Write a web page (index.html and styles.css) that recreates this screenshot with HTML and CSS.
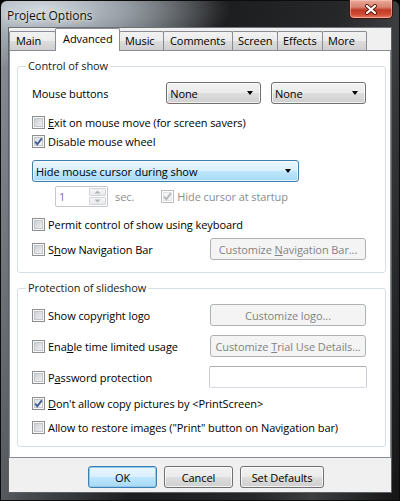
FILE: index.html
```html
<!DOCTYPE html>
<html>
<head>
<meta charset="utf-8">
<link rel="stylesheet" href="styles.css">
</head>
<body>
<div class="window">
  <div class="titlebar">
    <span class="title">Project Options</span>
    <div class="close">
      <svg width="14" height="11" viewBox="0 0 14 11"><path d="M3 2 L11 9 M11 2 L3 9" stroke="#5a1a10" stroke-width="4" stroke-linecap="round"/><path d="M3 2 L11 9 M11 2 L3 9" stroke="#fff" stroke-width="2.2" stroke-linecap="round"/></svg>
    </div>
  </div>
  <div class="client">
    <div class="tabs">
      <div class="tab t-main">Main</div>
      <div class="tab active t-adv">Advanced</div>
      <div class="tab t-music">Music</div>
      <div class="tab t-comm">Comments</div>
      <div class="tab t-screen">Screen</div>
      <div class="tab t-eff">Effects</div>
      <div class="tab t-more">More</div>
    </div>
    <div class="panel">
      <div class="group g1">
        <span class="legend">Control of show</span>
        <div class="row r-mouse">
          <span class="lbl-mouse">Mouse buttons</span>
          <div class="combo small"><span>None</span><span class="arrow"></span></div>
          <div class="combo small"><span>None</span><span class="arrow"></span></div>
        </div>
        <div class="row chk-row mt9">
          <span class="cb"></span><span><u>E</u>xit on mouse move (for screen savers)</span>
        </div>
        <div class="row chk-row mt1">
          <span class="cb checked"><svg width="11" height="11" viewBox="0 0 11 11"><path d="M2.2 5.6 L4.3 8.3 L8.8 2.4" fill="none" stroke="#3b5b94" stroke-width="1.8"/></svg></span><span>Disable mouse wheel</span>
        </div>
        <div class="row mt10">
          <div class="combo big hot"><span>Hide mouse cursor during show</span><span class="arrow"></span></div>
        </div>
        <div class="row r-spin">
          <div class="spin">
            <span class="spin-val">1</span>
            <div class="spin-btns">
              <span class="sb"><svg width="7" height="4" viewBox="0 0 7 4"><path d="M0.5 3.5 L3.5 0.5 L6.5 3.5Z" fill="#b0b4b8"/></svg></span>
              <span class="sb"><svg width="7" height="4" viewBox="0 0 7 4"><path d="M0.5 0.5 L3.5 3.5 L6.5 0.5Z" fill="#b0b4b8"/></svg></span>
            </div>
          </div>
          <span class="sec dis">sec.</span>
          <span class="cb checked disabled"><svg width="11" height="11" viewBox="0 0 11 11"><path d="M2.2 5.6 L4.3 8.3 L8.8 2.4" fill="none" stroke="#b3b6ba" stroke-width="1.8"/></svg></span><span class="dis">Hide cursor at startup</span>
        </div>
        <div class="row chk-row mt8">
          <span class="cb"></span><span>Permit control of show using keyboard</span>
        </div>
        <div class="row r-btn mt5">
          <div class="chk-lbl"><span class="cb"></span><span>S<u>h</u>ow Navigation Bar</span></div>
          <div class="btn disabled wide"><span>Customize <u>N</u>avigation Bar...</span></div>
        </div>
      </div>

      <div class="group g2">
        <span class="legend">Protection of slideshow</span>
        <div class="row r-btn">
          <div class="chk-lbl"><span class="cb"></span><span>Show copyright logo</span></div>
          <div class="btn disabled wide"><span>Customize logo...</span></div>
        </div>
        <div class="row r-btn mt9">
          <div class="chk-lbl"><span class="cb"></span><span>Ena<u>b</u>le time limited usage</span></div>
          <div class="btn disabled wide"><span>Customize <u>T</u>rial Use Details...</span></div>
        </div>
        <div class="row r-btn mt9">
          <div class="chk-lbl"><span class="cb"></span><span>P<u>a</u>ssword protection</span></div>
          <div class="edit"></div>
        </div>
        <div class="row chk-row mt6">
          <span class="cb checked"><svg width="11" height="11" viewBox="0 0 11 11"><path d="M2.2 5.6 L4.3 8.3 L8.8 2.4" fill="none" stroke="#3b5b94" stroke-width="1.8"/></svg></span><span><u>D</u>on't allow copy pictures by &lt;PrintScreen&gt;</span>
        </div>
        <div class="row chk-row mt6">
          <span class="cb"></span><span>Allow to restore images ("Print" button on Navigation bar)</span>
        </div>
      </div>
    </div>
    <div class="buttons">
      <div class="btn default b-ok">OK</div>
      <div class="btn b-cancel">Cancel</div>
      <div class="btn b-def">Set Defaults</div>
    </div>
  </div>
</div>
</body>
</html>
```

FILE: styles.css
```css
* { box-sizing: border-box; }
html, body { margin: 0; padding: 0; }
body {
  width: 400px;
  height: 501px;
  overflow: hidden;
  background: #000;
  font-family: "Open Sans", "Noto Sans", sans-serif;
  font-size: 11px;
  letter-spacing: -0.08px;
  color: #000;
}
u { text-decoration: underline; text-underline-offset: 1px; }

.window {
  width: 400px;
  height: 501px;
  border: 1px solid #0c0c0c;
  border-radius: 7px 7px 0 0;
  background:
    radial-gradient(ellipse 190px 60px at 40px 8px, rgba(214,221,227,0.95) 0%, rgba(170,178,186,0.8) 45%, rgba(120,126,132,0) 100%),
    linear-gradient(100deg, #8d949a 0%, #4b4f53 22%, #1c1d1e 45%, #262728 70%, #3b3d3f 82%, #151515 100%);
  display: flex;
  flex-direction: column;
}

.titlebar {
  height: 26px;
  display: flex;
  align-items: flex-start;
  position: relative;
}
.title {
  margin: 6px 0 0 6px;
  font-size: 12px;
  color: #111;
  text-shadow: 0 0 6px #e8edf1, 0 0 3px #e8edf1;
}
.close {
  position: absolute;
  right: 6px;
  top: -1px;
  width: 44px;
  height: 19px;
  border: 1px solid #4a130b;
  border-top: none;
  border-radius: 0 0 5px 5px;
  background: linear-gradient(#e9a99a 0%, #d9826f 40%, #bf3b26 55%, #d14a34 80%, #e2816b 100%);
  box-shadow: inset 0 0 0 1px rgba(255,210,200,0.5);
  display: flex;
  align-items: center;
  justify-content: center;
}

.client {
  margin: 0 7px;
  height: 466px;
  background: #f0f0f0;
  border: 1px solid #5e6266;
  border-top-color: #6d7378;
  display: flex;
  flex-direction: column;
}

.tabs {
  height: 22px;
  display: flex;
  align-items: flex-end;
  padding-left: 0;
}
.tab {
  height: 19px;
  border: 1px solid #898c95;
  border-bottom: none;
  border-radius: 2px 2px 0 0;
  background: linear-gradient(#f2f2f2 0%, #ebebeb 50%, #dddddd 51%, #cfcfcf 100%);
  padding-left: 6px;
  line-height: 17px;
  margin-left: -1px;
}
.t-main { width: 47px; margin-left: 0; }
.t-adv { width: 65px; }
.t-music { width: 45px; padding-left: 5px; }
.t-comm { width: 70px; }
.t-screen { width: 46px; padding-left: 5px; }
.t-eff { width: 46px; padding-left: 5px; }
.t-more { width: 45px; padding-left: 5px; }
.tab.active {
  height: 23px;
  margin-bottom: -1px;
  background: #fff;
  position: relative;
  z-index: 1;
  line-height: 19px;
  padding-left: 7px;
}

.panel {
  height: 408px;
  width: 382px;
  background: #fff;
  border: 1px solid #898c95;
  padding: 15px 0 0 7px;
}

.group {
  position: relative;
  width: 369px;
  border: 1px solid #d5dfe5;
  border-radius: 3px;
  padding: 15px 19px 0 14px;
  display: flex;
  flex-direction: column;
}
.g1 { padding-bottom: 12px; }
.g2 { margin-top: 15px; padding-bottom: 10px; }
.legend {
  position: absolute;
  top: -9px;
  left: 8px;
  padding: 0 2px;
  background: #fff;
  color: #1a1a1a;
  line-height: 16px;
}

.row { display: flex; align-items: center; }
.chk-row { height: 18px; }
.mt1 { margin-top: 1px; }
.mt5 { margin-top: 5px; }
.mt6 { margin-top: 6px; }
.mt8 { margin-top: 8px; }
.mt9 { margin-top: 9px; }
.mt10 { margin-top: 10px; }

.r-mouse { height: 22px; }
.lbl-mouse { width: 136px; }
.r-mouse .combo + .combo { margin-left: 10px; }

.cb {
  width: 13px;
  height: 13px;
  flex: none;
  margin-right: 3px;
  border: 1px solid #8e8f8f;
  background: linear-gradient(135deg, #c6cace 0%, #e2e4e6 60%, #f4f4f4 100%);
  box-shadow: inset 0 0 0 1px #f6f6f6, inset 0 0 0 2px #c3c6ca;
  display: flex;
  align-items: center;
  justify-content: center;
}
.cb.checked {
  background: linear-gradient(135deg, #d3d6d9 0%, #eceeef 60%, #fafafa 100%);
}
.cb.disabled {
  border-color: #bcbdbe;
  background: #f4f4f4;
  box-shadow: inset 0 0 0 1px #fff, inset 0 0 0 2px #e3e4e5;
}
.dis { color: #8d8d8d; }

.combo {
  height: 22px;
  border: 1px solid #707070;
  border-radius: 3px;
  background: linear-gradient(#f2f2f2 0%, #ebebeb 50%, #dddddd 51%, #cfcfcf 100%);
  box-shadow: inset 0 0 0 1px rgba(255,255,255,0.7);
  display: flex;
  align-items: center;
  justify-content: space-between;
  padding: 0 7px 0 3px;
}
.combo.small { width: 96px; }
.combo.big { width: 267px; }
.combo.hot {
  border-color: #3c7fb1;
  background: linear-gradient(#eaf6fd 0%, #d9f0fc 50%, #bee6fd 51%, #a7d9f5 100%);
}
.arrow {
  width: 0;
  height: 0;
  border-left: 3.5px solid transparent;
  border-right: 3.5px solid transparent;
  border-top: 4px solid #000;
}

.r-spin { height: 21px; margin-top: 4px; }
.spin {
  margin-left: 23px;
  width: 53px;
  height: 21px;
  border: 1px solid #c3c6cb;
  border-radius: 2px;
  background: #fff;
  display: flex;
  align-items: center;
  justify-content: space-between;
  padding: 0 1px 0 3px;
}
.spin-val { color: #7f6f9a; }
.spin-btns { display: flex; flex-direction: column; gap: 1px; }
.sb {
  width: 17px;
  height: 8px;
  border: 1px solid #d2d4d7;
  border-radius: 1px;
  background: linear-gradient(#f6f6f6, #e9e9e9);
  display: flex;
  align-items: center;
  justify-content: center;
}
.sec { margin: 0 27px 0 7px; }

.r-btn { height: 22px; justify-content: space-between; }
.chk-lbl { display: flex; align-items: center; }

.btn {
  height: 22px;
  border: 1px solid #707070;
  border-radius: 3px;
  background: linear-gradient(#f2f2f2 0%, #ebebeb 50%, #dddddd 51%, #cfcfcf 100%);
  box-shadow: inset 0 0 0 1px rgba(255,255,255,0.75);
  display: flex;
  align-items: center;
  justify-content: center;
}
.btn.disabled {
  border-color: #adb2b5;
  background: #f4f4f4;
  color: #838383;
  box-shadow: none;
}
.btn.wide { width: 156px; }
.edit {
  width: 158px;
  height: 22px;
  margin-right: -1px;
  border: 1px solid #abadb3;
  border-left-color: #c9ccd2;
  border-right-color: #c9ccd2;
  border-bottom-color: #d8dce2;
  border-radius: 2px;
  background: #fff;
}

.buttons {
  display: flex;
  margin-top: 8px;
  padding-left: 79px;
}
.buttons .btn + .btn { margin-left: 7px; }
.b-ok { width: 69px; }
.b-cancel { width: 69px; }
.b-def { width: 84px; }
.btn.default {
  border-color: #3c7fb1;
  background: linear-gradient(#eaf6fd 0%, #d9f0fc 50%, #bee6fd 51%, #a7d9f5 100%);
  box-shadow: inset 0 0 0 1px #93c9eb;
}
```
